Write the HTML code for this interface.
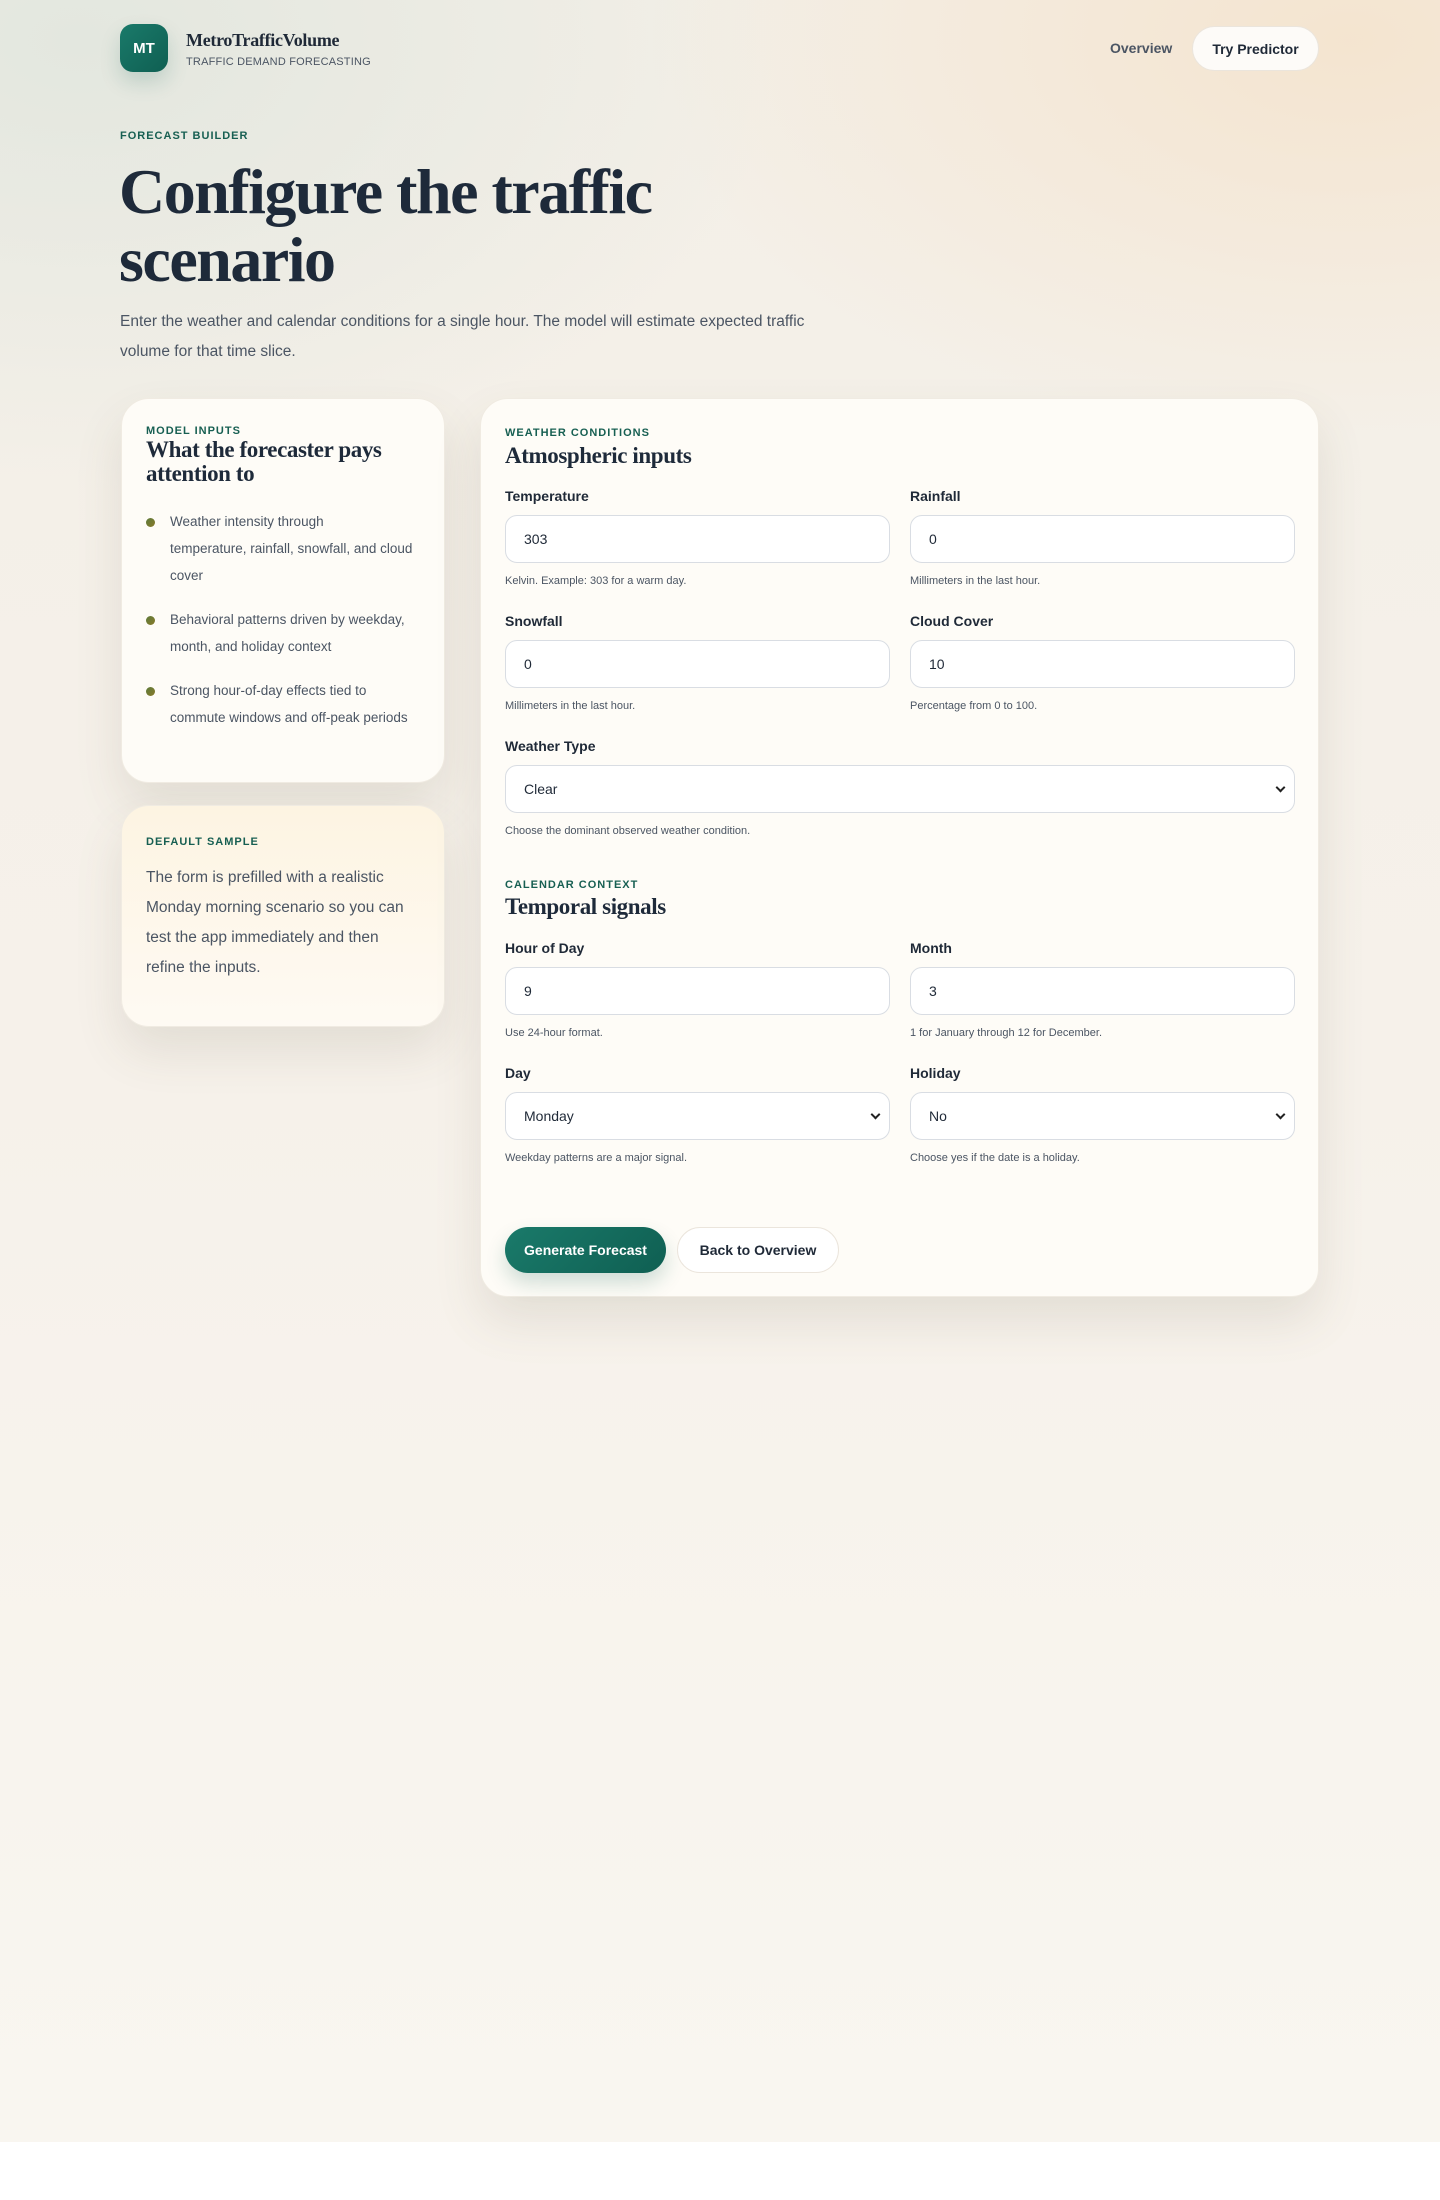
<!DOCTYPE html>
<html><head><meta charset="utf-8"><style>
*{box-sizing:border-box;margin:0;padding:0}
body{width:1440px;height:2200px;background:#fff;font-family:"Liberation Sans",sans-serif;color:#1f2937;position:relative;overflow:hidden}
.bg{position:absolute;left:0;top:0;width:1440px;height:2142px;background:
radial-gradient(ellipse 700px 400px at 1350px 40px,rgba(245,225,200,.75),rgba(245,225,200,0)),
radial-gradient(ellipse 700px 450px at 80px 40px,rgba(225,230,222,.9),rgba(225,230,222,0)),
linear-gradient(180deg,#f3efe7 0%,#f6f1ea 50%,#f9f6f0 100%)}
.a{position:absolute}
.logo{left:120px;top:24px;width:48px;height:48px;border-radius:13px;background:linear-gradient(135deg,#1a7a6a,#0f5f52);color:#fff;font-weight:bold;font-size:15px;display:flex;align-items:center;justify-content:center;box-shadow:0 10px 20px rgba(15,95,82,.18)}
.brand{left:186px;top:30px;font-family:"Liberation Serif",serif;font-weight:bold;font-size:18px;color:#1f2937;letter-spacing:-.3px}
.tag{left:186px;top:56px;font-size:11px;color:#4b5563;letter-spacing:.2px}
.nav{left:1110px;top:40px;font-size:14px;font-weight:bold;color:#4b5563}
.try{left:1192px;top:26px;width:127px;height:45px;border-radius:23px;background:#fdfbf8;border:1px solid #ebe5dc;font-size:14px;font-weight:bold;color:#1f2937;display:flex;align-items:center;justify-content:center}
.eyebrow{font-size:11px;font-weight:bold;letter-spacing:1px;color:#175f52;text-transform:uppercase}
h1{position:absolute;left:119px;top:158px;font-family:"Liberation Serif",serif;font-weight:bold;font-size:64px;line-height:68px;color:#1e2a3a;letter-spacing:-1.5px}
.lead{left:120px;top:307px;width:720px;font-size:15.5px;line-height:30px;color:#4b5563}
.card{position:absolute;border-radius:28px;background:#fefcf7;box-shadow:0 24px 48px rgba(90,80,60,.12);border:1px solid #f0ebe2}
.h2{font-family:"Liberation Serif",serif;font-weight:bold;font-size:23px;line-height:24px;color:#1e2a3a;letter-spacing:-.4px}
ul{list-style:none;width:270px}
li{position:relative;padding-left:24px;font-size:13.5px;line-height:27px;color:#4b5563;margin-bottom:17px}
li:before{content:"";position:absolute;left:0;top:10px;width:9px;height:9px;border-radius:50%;background:linear-gradient(135deg,#5b7a3a,#8a7a2a)}
.lbl{position:absolute;font-size:14px;font-weight:bold;color:#1f2937}
.in{position:absolute;width:385px;height:48px;border:1px solid #d9dde3;border-radius:12px;background:#fff;font-size:14px;color:#1f2937;padding-left:18px;display:flex;align-items:center}
.in.w{width:790px}
.chev{position:absolute;right:10px;top:18px;width:7px;height:7px;border-right:2px solid #222;border-bottom:2px solid #222;transform:rotate(45deg)}
.help{position:absolute;font-size:11px;color:#4b5563}
.btn1{left:24px;top:828px;width:161px;height:46px;border-radius:23px;background:linear-gradient(135deg,#1a7a6a,#0f5f52);color:#fff;font-size:14px;font-weight:bold;display:flex;align-items:center;justify-content:center;box-shadow:0 10px 20px rgba(15,95,82,.2)}
.btn2{left:196px;top:828px;width:162px;height:46px;border-radius:23px;background:#fff;border:1px solid #ebe5dc;color:#1f2937;font-size:14px;font-weight:bold;display:flex;align-items:center;justify-content:center}
</style></head><body>
<div class="bg"></div>
<div class="a logo">MT</div>
<div class="a brand">MetroTrafficVolume</div>
<div class="a tag">TRAFFIC DEMAND FORECASTING</div>
<div class="a nav">Overview</div>
<div class="a try">Try Predictor</div>
<div class="a eyebrow" style="left:120px;top:130px">Forecast Builder</div>
<h1>Configure the traffic<br>scenario</h1>
<div class="a lead">Enter the weather and calendar conditions for a single hour. The model will estimate expected traffic volume for that time slice.</div>

<div class="card" style="left:121px;top:398px;width:324px;height:385px;padding:26px 24px">
<div class="eyebrow" style="margin-bottom:1px">Model inputs</div>
<div class="h2">What the forecaster pays attention to</div>
<ul style="margin-top:22px">
<li>Weather intensity through<br>temperature, rainfall, snowfall, and cloud cover</li>
<li>Behavioral patterns driven by weekday, month, and holiday context</li>
<li>Strong hour-of-day effects tied to commute windows and off-peak periods</li>
</ul>
</div>
<div class="card" style="left:121px;top:805px;width:324px;height:222px;padding:30px 24px;background:linear-gradient(180deg,#fdf4e2,#fefaf3)">
<div class="eyebrow">Default sample</div>
<div style="margin-top:15px;font-size:15.5px;line-height:30px;color:#4b5563">The form is prefilled with a realistic Monday morning scenario so you can test the app immediately and then refine the inputs.</div>
</div>

<div class="card" style="left:480px;top:398px;width:839px;height:899px">
<div class="a eyebrow" style="left:24px;top:28px">Weather conditions</div>
<div class="a h2" style="left:24px;top:45px">Atmospheric inputs</div>

<div class="lbl" style="left:24px;top:89px">Temperature</div>
<div class="in" style="left:24px;top:116px">303</div>
<div class="help" style="left:24px;top:176px">Kelvin. Example: 303 for a warm day.</div>
<div class="lbl" style="left:429px;top:89px">Rainfall</div>
<div class="in" style="left:429px;top:116px">0</div>
<div class="help" style="left:429px;top:176px">Millimeters in the last hour.</div>

<div class="lbl" style="left:24px;top:214px">Snowfall</div>
<div class="in" style="left:24px;top:241px">0</div>
<div class="help" style="left:24px;top:301px">Millimeters in the last hour.</div>
<div class="lbl" style="left:429px;top:214px">Cloud Cover</div>
<div class="in" style="left:429px;top:241px">10</div>
<div class="help" style="left:429px;top:301px">Percentage from 0 to 100.</div>

<div class="lbl" style="left:24px;top:339px">Weather Type</div>
<div class="in w" style="left:24px;top:366px">Clear<span class="chev"></span></div>
<div class="help" style="left:24px;top:426px">Choose the dominant observed weather condition.</div>

<div class="a eyebrow" style="left:24px;top:480px">Calendar context</div>
<div class="a h2" style="left:24px;top:496px">Temporal signals</div>

<div class="lbl" style="left:24px;top:541px">Hour of Day</div>
<div class="in" style="left:24px;top:568px">9</div>
<div class="help" style="left:24px;top:628px">Use 24-hour format.</div>
<div class="lbl" style="left:429px;top:541px">Month</div>
<div class="in" style="left:429px;top:568px">3</div>
<div class="help" style="left:429px;top:628px">1 for January through 12 for December.</div>

<div class="lbl" style="left:24px;top:666px">Day</div>
<div class="in" style="left:24px;top:693px">Monday<span class="chev"></span></div>
<div class="help" style="left:24px;top:753px">Weekday patterns are a major signal.</div>
<div class="lbl" style="left:429px;top:666px">Holiday</div>
<div class="in" style="left:429px;top:693px">No<span class="chev"></span></div>
<div class="help" style="left:429px;top:753px">Choose yes if the date is a holiday.</div>

<div class="a btn1">Generate Forecast</div>
<div class="a btn2">Back to Overview</div>
</div>
</body></html>
